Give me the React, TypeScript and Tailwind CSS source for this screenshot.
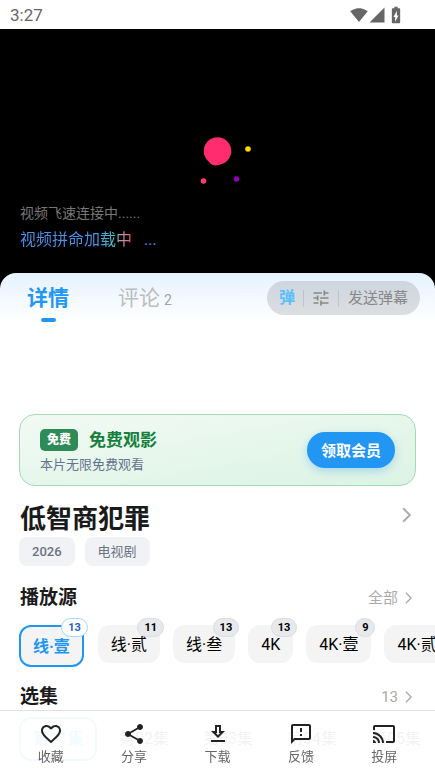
import type { ReactNode } from "react";
import {
  MdBatteryChargingFull,
  MdCast,
  MdFavoriteBorder,
  MdOutlineDownload,
  MdOutlineFeedback,
  MdShare,
  MdSignalCellular4Bar,
  MdSignalWifi4Bar,
  MdTune,
} from "react-icons/md";

const sources: { name: string; count?: number }[] = [
  { name: "线·壹", count: 13 },
  { name: "线·贰", count: 11 },
  { name: "线·叁", count: 13 },
  { name: "4K", count: 13 },
  { name: "4K·壹", count: 9 },
  { name: "4K·贰" },
];

const episodes = ["第01集", "第02集", "第03集", "第04集", "第05集"];

const actions: { label: string; icon: ReactNode }[] = [
  { label: "收藏", icon: <MdFavoriteBorder /> },
  { label: "分享", icon: <MdShare /> },
  { label: "下载", icon: <MdOutlineDownload /> },
  { label: "反馈", icon: <MdOutlineFeedback /> },
  { label: "投屏", icon: <MdCast /> },
];

function Chevron({ className }: { className: string }) {
  return (
    <svg viewBox="0 0 8 14" fill="none" stroke="currentColor" className={className} aria-hidden="true">
      <path d="M1 1l6 6-6 6" strokeWidth="1.6" />
    </svg>
  );
}

function StatusBar() {
  return (
    <header className="flex h-[29px] items-center justify-between bg-white pl-[10px] pr-[29px] text-[#666]">
      <span className="text-[17px] leading-6">3:27</span>
      <div className="flex items-center">
        <MdSignalWifi4Bar className="size-[18px]" />
        <MdSignalCellular4Bar className="size-[18px]" />
        <MdBatteryChargingFull className="size-5" />
      </div>
    </header>
  );
}

function Player() {
  return (
    <section className="relative flex h-[263px] flex-col px-5 pt-[175px]">
      <svg viewBox="0 0 80 60" className="absolute left-1/2 top-[97px] h-[60px] w-20 -translate-x-1/2" aria-hidden="true">
        <circle cx="39.500" cy="25" r="13.7" fill="#ff2d70" />
        <circle cx="37.500" cy="32" r="7.5" fill="#ff2d70" />
        <circle cx="70" cy="23" r="2.8" fill="#ffd600" />
        <circle cx="58.500" cy="53" r="2.8" fill="#8e00b5" />
        <circle cx="25.500" cy="55" r="2.8" fill="#ff3b77" />
      </svg>
      <p className="text-sm leading-[18px] text-[#777]">视频飞速连接中......</p>
      <p className="mt-[6px] flex text-base leading-6">
        <span className="bg-linear-to-r from-[#4a8fe8] from-65% via-[#4cc0cc] via-85% to-[#ff2d70] bg-clip-text text-transparent">
          视频拼命加载中
        </span>
        <span className="ml-3 text-[#4a8fe8]">...</span>
      </p>
    </section>
  );
}

function SheetTabs() {
  return (
    <div className="flex h-[49px] items-start justify-between pl-[27px] pr-[15px] pt-2">
      <div className="flex gap-[49px]">
        <button className="flex flex-col items-center text-[#2196f3]">
          <span className="text-[21px] font-bold leading-[34px]">详情</span>
          <span className="mt-[3px] h-1 w-[15px] rounded-full bg-[#2196f3]" />
        </button>
        <button className="flex items-baseline self-start text-[#bdbdbd]">
          <span className="text-[21px] leading-[34px]">评论</span>
          <span className="ml-1 text-sm text-[#9ca3af]">2</span>
        </button>
      </div>
      <div className="flex h-[34px] items-center rounded-full bg-black/12 px-3">
        <button className="text-base font-bold leading-6 text-[#5ac0fb]">弹</button>
        <span className="ml-2 h-[17px] w-px bg-black/10" />
        <button aria-label="弹幕设置" className="mx-[7px] text-[#888]">
          <MdTune className="size-5" />
        </button>
        <span className="h-[17px] w-px bg-black/10" />
        <button className="ml-[9px] text-[15px] leading-6 text-[#888]">发送弹幕</button>
      </div>
    </div>
  );
}

function FreeCard() {
  return (
    <section className="mx-[19px] mt-[92px] flex h-[72px] items-center justify-between rounded-2xl border border-[#a3dab5] bg-linear-to-br from-[#f1faf4] to-[#dcf3e4] px-5">
      <div className="pt-[2px]">
        <div className="flex items-center gap-[11px]">
          <span className="rounded-[5px] bg-[#2e8b57] px-[7px] text-xs font-black leading-[22px] text-white">免费</span>
          <h2 className="text-[17px] font-bold leading-6 text-[#15803d]">免费观影</h2>
        </div>
        <p className="mt-[3px] text-[13px] leading-5 text-[#64748b]">本片无限免费观看</p>
      </div>
      <button className="h-9 rounded-full bg-[#2196f3] px-[14px] pt-[2px] text-[15px] font-bold text-white shadow-[0_3px_8px_rgba(33,150,243,0.3)]">
        领取会员
      </button>
    </section>
  );
}

function SectionHead({ title, more }: { title: string; more: string }) {
  return (
    <div className="flex h-7 items-center justify-between pl-5 pr-[23px]">
      <h2 className="text-[19px] font-bold text-[#1a1a1a]">{title}</h2>
      <button className="flex items-center gap-[7px] text-[15px] text-[#aaa]">
        {more}
        <Chevron className="h-3 w-[7px]" />
      </button>
    </div>
  );
}

function Sources() {
  return (
    <div className="flex items-start gap-[13px] overflow-hidden pb-4 pl-[19px] pt-[13px]">
      {sources.map((source, i) => (
        <button
          key={source.name}
          className={
            i === 0
              ? "relative mr-px h-[42px] shrink-0 rounded-xl border-2 border-[#2196f3] bg-[#f4f4f4] px-3 pt-[2px] text-base font-bold text-[#2196f3]"
              : "relative h-[38px] shrink-0 rounded-xl bg-[#f4f4f4] px-[13px] pt-[2px] text-base text-black"
          }
        >
          {source.name}
          {source.count !== undefined && (
            <span
              className={
                i === 0
                  ? "absolute -right-[6px] -top-[9px] rounded-full border border-[#a9d5fb] bg-white px-[6px] text-[11px] font-bold leading-[17px] text-[#1e62c0]"
                  : "absolute -right-1 -top-[7px] rounded-full border border-[#dcdde0] bg-[#e8e9ec] px-[6px] text-[11px] font-bold leading-[17px] text-black"
              }
            >
              {source.count}
            </span>
          )}
        </button>
      ))}
    </div>
  );
}

function Episodes() {
  return (
    <div className="flex gap-[6px] overflow-hidden pl-[19px] pt-[6px]">
      {episodes.map((episode, i) => (
        <button
          key={episode}
          className={
            i === 0
              ? "mr-[2px] h-11 w-[78px] shrink-0 rounded-xl border-2 border-[#2196f3] text-base font-bold text-[#2196f3]"
              : "h-11 w-[78px] shrink-0 rounded-xl text-base text-black"
          }
        >
          {episode}
        </button>
      ))}
    </div>
  );
}

function ActionBar() {
  return (
    <nav className="fixed inset-x-0 bottom-0 flex h-[63px] border-t border-[#e0e0e0] bg-white/95 px-[9px]">
      {actions.map((action) => (
        <button key={action.label} className="flex flex-1 flex-col items-center pt-[11px] text-[13px] leading-[22px] text-[#666]">
          <span className="text-2xl leading-6 text-[#222]">{action.icon}</span>
          {action.label}
        </button>
      ))}
    </nav>
  );
}

export default function App() {
  return (
    <div className="h-screen overflow-hidden bg-black font-[Roboto,'Noto_Sans_CJK_SC',sans-serif]">
      <StatusBar />
      <Player />
      <main className="relative -mt-[19px] min-h-full rounded-t-[16px] bg-white bg-linear-to-b from-[#e5f2fe] to-white to-[48px]">
        <SheetTabs />
        <FreeCard />
        <div className="mt-[14px] flex h-[37px] items-start justify-between pl-5 pr-6">
          <h1 className="text-[26px] font-bold leading-[39px] text-[#1a1a1a]">低智商犯罪</h1>
          <button aria-label="查看简介" className="mt-[7px] text-[#aaa]">
            <Chevron className="h-4 w-[9px]" />
          </button>
        </div>
        <ul className="flex gap-[10px] pl-[19px] text-[13px] leading-[29px] text-[#6b7280]">
          <li className="rounded-lg bg-[#f1f2f5] px-[13px] font-medium">2026</li>
          <li className="rounded-lg bg-[#f1f2f5] px-[13px]">电视剧</li>
        </ul>
        <div className="mt-[18px]">
          <SectionHead title="播放源" more="全部" />
          <Sources />
          <SectionHead title="选集" more="13" />
          <Episodes />
        </div>
      </main>
      <ActionBar />
    </div>
  );
}
